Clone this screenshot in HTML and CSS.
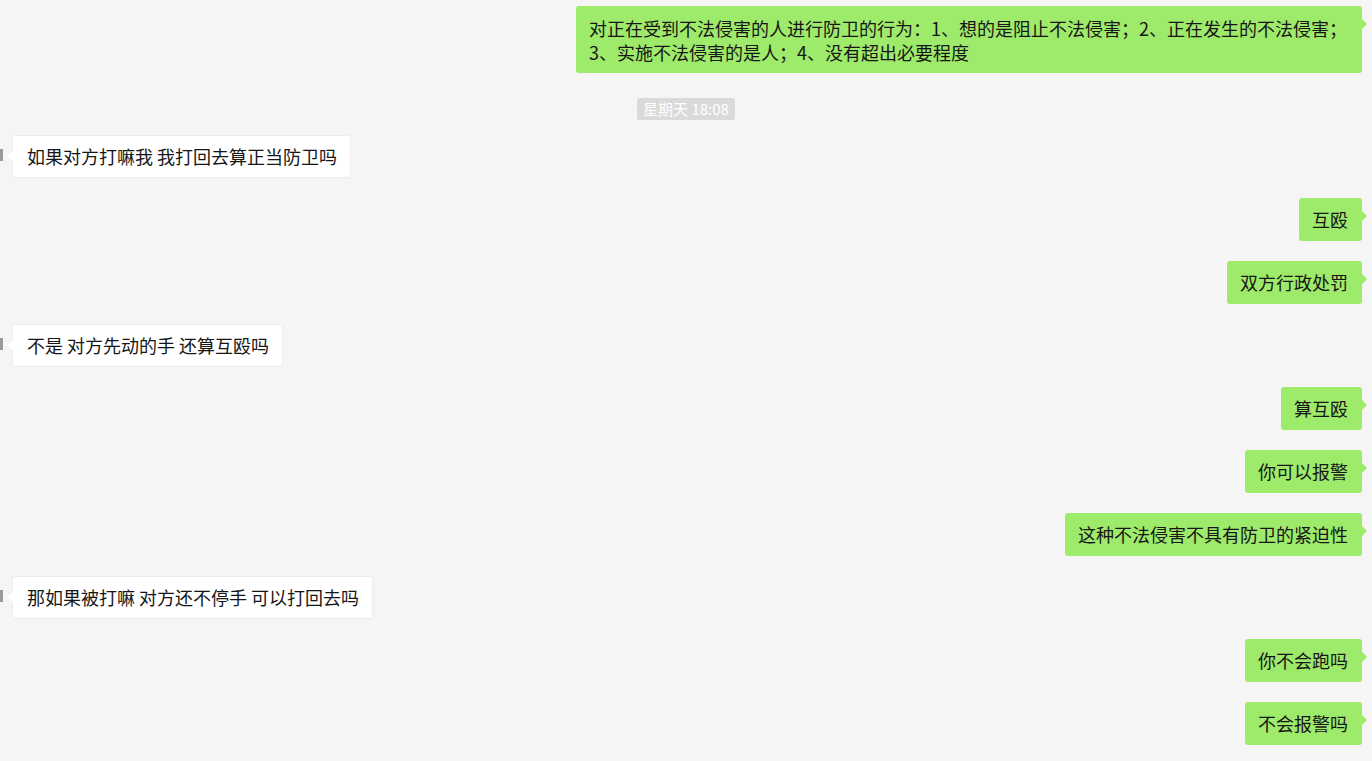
FILE: index.html
```html
<!DOCTYPE html>
<html lang="zh-CN">

<head>
    <meta charset="UTF-8">
    <meta name="viewport" content="width=device-width, initial-scale=1.0">
    <title>聊天记录</title>
    <link rel="stylesheet" href="styles.css">
</head>

<body>
    <div class="chat">
        <div class="row mine first">
            <div class="bubble long">对正在受到不法侵害的人进行防卫的行为：1、想的是阻止不法侵害；2、正在发生的不法侵害；<br>3、实施不法侵害的是人；4、没有超出必要程度</div>
        </div>

        <!-- 时间 -->
        <div class="time"><span>星期天 18:08</span></div>

        <div class="row other">
            <div class="avatar"></div>
            <div class="bubble">如果对方打嘛我 我打回去算正当防卫吗</div>
        </div>
        <div class="row mine"><div class="bubble">互殴</div></div>
        <div class="row mine"><div class="bubble">双方行政处罚</div></div>
        <div class="row other">
            <div class="avatar"></div>
            <div class="bubble">不是 对方先动的手 还算互殴吗</div>
        </div>
        <div class="row mine"><div class="bubble">算互殴</div></div>
        <div class="row mine"><div class="bubble">你可以报警</div></div>
        <div class="row mine"><div class="bubble">这种不法侵害不具有防卫的紧迫性</div></div>
        <div class="row other">
            <div class="avatar"></div>
            <div class="bubble">那如果被打嘛 对方还不停手 可以打回去吗</div>
        </div>
        <div class="row mine"><div class="bubble">你不会跑吗</div></div>
        <div class="row mine"><div class="bubble">不会报警吗</div></div>
    </div>
</body>

</html>
```

FILE: styles.css
```css
body {
    margin: 0;
    background-color: #f5f5f5;
    font-family: "Noto Sans CJK SC", "Liberation Sans", sans-serif;
    overflow: hidden;
    height: 761px;
}

.chat {
    display: flex;
    flex-direction: column;
    gap: 20px;
    padding: 6px 10px 0 0;
}

.row {
    display: flex;
    align-items: flex-start;
}

.row.mine {
    justify-content: flex-end;
}

.bubble {
    position: relative;
    font-size: 18px;
    line-height: 23px;
    color: #161616;
    padding: 10px 14px 10px 13px;
    border-radius: 3px;
}

.bubble.long {
    line-height: 24px;
    padding: 10px 15px 9px 13px;
}

.mine .bubble {
    background-color: #9eea6a;
}

/* 右侧小三角 */
.mine .bubble::after {
    content: "";
    position: absolute;
    right: -5px;
    top: 13px;
    border-style: solid;
    border-width: 5px 0 5px 5px;
    border-color: transparent transparent transparent #9eea6a;
}

.other .bubble {
    background-color: #fff;
    border: 1px solid #ececec;
    padding: 9px 13px 9px 14px;
}

.other .bubble::before {
    content: "";
    position: absolute;
    left: -6px;
    top: 15px;
    border-style: solid;
    border-width: 5px 6px 5px 0;
    border-color: transparent #fff transparent transparent;
}

.avatar {
    width: 36px;
    height: 36px;
    margin-left: -33px;
    margin-right: 9px;
    border-radius: 3px;
    background: linear-gradient(to bottom, transparent 14px, #9a9a9a 14px, #9a9a9a 26px, transparent 26px);
}

.time {
    display: flex;
    justify-content: center;
    margin: 5px 0 -5px 10px;
}

.time span {
    background-color: #dadada;
    color: #fff;
    font-size: 15px;
    line-height: 22px;
    padding: 0 6px;
    border-radius: 2px;
}
```
